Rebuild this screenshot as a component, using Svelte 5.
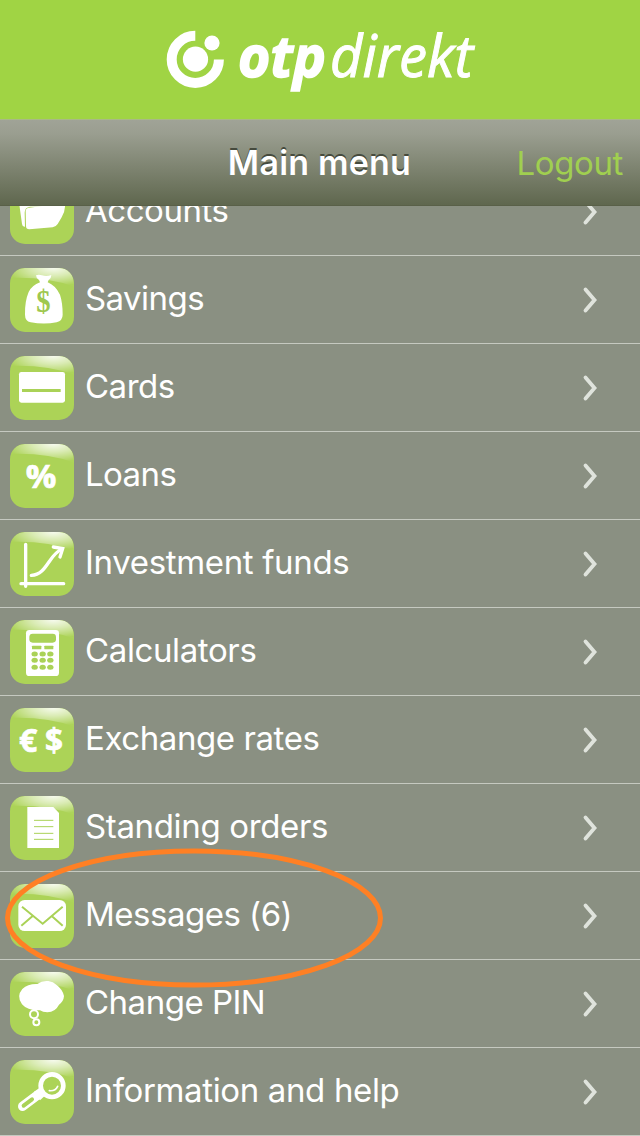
<script>
    const items = [
        { id: "accounts", label: "Accounts", spacing: -0.45 },
        { id: "savings", label: "Savings", spacing: -0.55 },
        { id: "cards", label: "Cards", spacing: -0.5 },
        { id: "loans", label: "Loans", spacing: -0.6 },
        { id: "funds", label: "Investment funds", spacing: -0.34 },
        { id: "calculators", label: "Calculators", spacing: -0.38 },
        { id: "rates", label: "Exchange rates", spacing: -0.42 },
        { id: "orders", label: "Standing orders", spacing: -0.35 },
        { id: "messages", label: "Messages (6)", spacing: -0.5 },
        { id: "pin", label: "Change PIN", spacing: -0.5 },
        { id: "help", label: "Information and help", spacing: -0.36 },
    ];
</script>

{#snippet icon(id)}
    <svg class="icon" viewBox="0 0 192 192">
        <path fill="url(#gloss)" d="M0 30Q16 0 44 0H148Q192 0 192 56Q110 26 0 30Z" />
        {#if id === "accounts"}
            <path class="white" d="M26 60H80L90 70H140V80H60Q44 82 44 98L45 140Q37 141 36 132Z" />
            <path class="white" d="M47 92Q48 84 58 83L158 70Q166 70 165 80Q164 98 155 112L143 132Q138 140 128 142L58 148Q48 148 48 138Z" />
        {:else if id === "savings"}
            <path class="white" d="M78 22Q86 18 96 22Q110 26 124 21Q124 31 116 36L113 43Q136 52 150 80Q158 104 158 140Q158 158 140 163Q102 170 62 163Q45 159 45 140Q44 100 56 72Q66 52 90 43L87 36Q78 30 78 22Z" />
            <text class="serif" x="79" y="133" textLength="43" lengthAdjust="spacingAndGlyphs">$</text>
        {:else if id === "cards"}
            <rect class="white" x="27" y="48" width="138" height="92" rx="7" />
            <rect class="green" x="36" y="99" width="116" height="9" />
        {:else if id === "loans"}
            <text class="sign" x="47" y="131" font-size="98" textLength="92" lengthAdjust="spacingAndGlyphs">%</text>
        {:else if id === "funds"}
            <path class="line" stroke-width="10" d="M47 37V163M33 155H161" />
            <path class="line" stroke-width="10" d="M64 130C112 128 116 66 157 51" />
            <path class="line" stroke-width="10" stroke-linejoin="miter" d="M130 45L158 50L150 75" />
        {:else if id === "calculators"}
            <rect class="white" x="48" y="30" width="99" height="138" rx="10" />
            <rect class="green" x="58" y="41" width="80" height="27" rx="10" />
            <rect class="green" x="66" y="77" width="28" height="11" rx="2" />
            <rect class="green" x="103" y="77" width="27" height="11" rx="2" />
            {#each [102, 121, 142] as y}
                {#each [74, 98, 121] as x}
                    <ellipse class="green" cx={x} cy={y} rx="9.5" ry="7.5" />
                {/each}
            {/each}
        {:else if id === "rates"}
            <text class="sign" x="27" y="133" font-size="94" textLength="55" lengthAdjust="spacingAndGlyphs">€</text>
            <text class="sign" x="105" y="133" font-size="96" textLength="54" lengthAdjust="spacingAndGlyphs">$</text>
        {:else if id === "orders"}
            <path class="white" d="M52 33H130L147 51V156H52Z" />
            <path class="cut" stroke-width="3" d="M72 73H130M72 92H130M72 112H130M72 130H130" />
        {:else if id === "messages"}
            <rect class="white" x="25" y="48" width="143" height="93" rx="19" />
            <path class="cut" stroke-width="6" d="M36 68L98 119L158 68M34 125L67 97M158 125L126 97" />
        {:else if id === "pin"}
            <path class="white" d="M82 36Q96 25 115 27Q130 29 139 38Q158 52 162 72Q161 88 147 98Q136 120 112 121Q98 121 90 115Q52 116 36 97Q18 73 37 51Q54 35 82 36Z" />
            <circle class="line" cx="72" cy="127" r="12" stroke-width="6" />
            <circle class="line" cx="79" cy="151" r="9" stroke-width="6" />
        {:else}
            <circle class="line" cx="126" cy="77" r="34" stroke-width="14" />
            <path class="line" stroke-width="5" d="M118 92Q136 94 143 79" />
            <path class="line" stroke-width="28" d="M38 139L82 106" />
            <path class="white" d="M72 95L88 84L104 108L90 121Z" />
            <path class="cut" stroke-width="12" stroke-linecap="round" d="M41 137L66 118" />
        {/if}
    </svg>
{/snippet}

<div class="screen">
    <header class="brand">
        <svg class="logo" viewBox="0 0 320 80" role="img" aria-label="otpdirekt">
            <path class="ring" d="M35.3 15.8A23.6 23.6 0 1 0 58.9 39.4" />
            <circle class="white" cx="35.5" cy="39.2" r="12.6" />
            <circle class="white" cx="52" cy="23" r="7.6" />
            <text class="otp" x="78" y="57" textLength="88" lengthAdjust="spacingAndGlyphs">otp</text>
            <text class="direkt" x="170" y="57" textLength="143" lengthAdjust="spacingAndGlyphs">direkt</text>
        </svg>
    </header>

    <nav class="bar">
        <span></span>
        <h1 class="title">Main menu</h1>
        <button class="logout">Logout</button>
    </nav>

    <main class="view">
        <ul class="menu">
            {#each items as item}
                <li class="item">
                    {@render icon(item.id)}
                    <span class="label" style="letter-spacing: {item.spacing}px">{item.label}</span>
                    <svg class="chevron" viewBox="0 0 16 28">
                        <path d="M3.5 3.5L12.5 14L3.5 24.5" />
                    </svg>
                </li>
            {/each}
        </ul>
    </main>

    <svg class="highlight" viewBox="0 0 380 140">
        <ellipse cx="190" cy="70" rx="186.5" ry="67" />
    </svg>

    <svg class="defs">
        <defs>
            <radialGradient id="gloss" gradientUnits="userSpaceOnUse" cx="0" cy="0" r="1" gradientTransform="translate(130 0) scale(140 54)">
                <stop offset="0" stop-color="#fff" stop-opacity="0.9" />
                <stop offset="0.45" stop-color="#fff" stop-opacity="0.55" />
                <stop offset="1" stop-color="#fff" stop-opacity="0.02" />
            </radialGradient>
        </defs>
    </svg>
</div>


<style>
    :global(body) {
        background: #8a9082;
    }

    .screen {
        position: relative;
        display: flex;
        flex-direction: column;
        width: 640px;
        height: 1136px;
        overflow: hidden;
        background: #8a9082;
        font-family: Inter, "Liberation Sans", sans-serif;
        color: #fff;
    }

    .brand {
        display: flex;
        justify-content: center;
        align-items: center;
        flex: none;
        height: 119px;
        background: #a0d444;
    }

    .logo {
        width: 320px;
        height: 80px;
        overflow: visible;
    }

    .white {
        fill: #fff;
    }

    .green {
        fill: #aad257;
    }

    .ring {
        fill: none;
        stroke: #fff;
        stroke-width: 10;
    }

    .otp,
    .direkt {
        font-family: "Open Sans", "Noto Sans", sans-serif;
        font-size: 58px;
        font-style: italic;
        fill: #fff;
        stroke: #fff;
    }

    .otp {
        font-weight: 700;
        stroke-width: 1.6;
    }

    .direkt {
        stroke-width: 1;
    }

    .bar {
        box-sizing: border-box;
        display: grid;
        grid-template-columns: 1fr auto 1fr;
        align-items: center;
        flex: none;
        height: 87px;
        padding: 0 17px 0 16px;
        border-top: 1px solid #a9b887;
        border-bottom: 1px solid #596048;
        background: linear-gradient(#a0a397, #9a9e90 16%, #5f674e);
    }

    .title {
        margin: 0;
        font-size: 34px;
        font-weight: 600;
        line-height: 40px;
        letter-spacing: 0.2px;
        text-shadow: 0 -2px 0 #454a3d;
    }

    .logout {
        justify-self: end;
        padding: 0;
        border: none;
        background: none;
        font: inherit;
        font-size: 33px;
        line-height: 40px;
        letter-spacing: -0.4px;
        color: #a0cf50;
    }

    .view {
        display: flex;
        flex-direction: column;
        justify-content: flex-end;
        flex: 1;
        overflow: hidden;
    }

    .menu {
        margin: 0;
        padding: 0;
        list-style: none;
    }

    .item {
        box-sizing: border-box;
        display: flex;
        align-items: center;
        height: 88px;
        padding: 0 42px 0 10px;
        border-bottom: 1px solid #c5c9c0;
    }

    .icon {
        flex: none;
        width: 64px;
        height: 64px;
        border-radius: 15px;
        background: #acd357;
    }

    .label {
        flex: 1;
        padding: 0 0 3px 11px;
        font-size: 33px;
        font-weight: 400;
        line-height: 40px;
        white-space: nowrap;
    }

    .chevron {
        width: 16px;
        height: 28px;
    }

    .chevron path {
        fill: none;
        stroke: #dfe3dc;
        stroke-width: 3.8;
        stroke-linecap: round;
    }

    .line {
        fill: none;
        stroke: #fff;
        stroke-linecap: round;
    }

    .cut {
        fill: none;
        stroke: #aad257;
    }

    .sign {
        font-family: "Open Sans", sans-serif;
        font-weight: 700;
        fill: #fff;
        stroke: #fff;
        stroke-width: 2;
    }

    .serif {
        font-family: "Liberation Serif", serif;
        font-size: 92px;
        font-weight: 700;
        fill: #9fc850;
    }

    .highlight {
        position: absolute;
        top: 848px;
        left: 4px;
        width: 380px;
        height: 140px;
    }

    .highlight ellipse {
        fill: none;
        stroke: #ff8024;
        stroke-width: 5;
    }

    .defs {
        position: absolute;
        width: 0;
        height: 0;
    }
</style>
